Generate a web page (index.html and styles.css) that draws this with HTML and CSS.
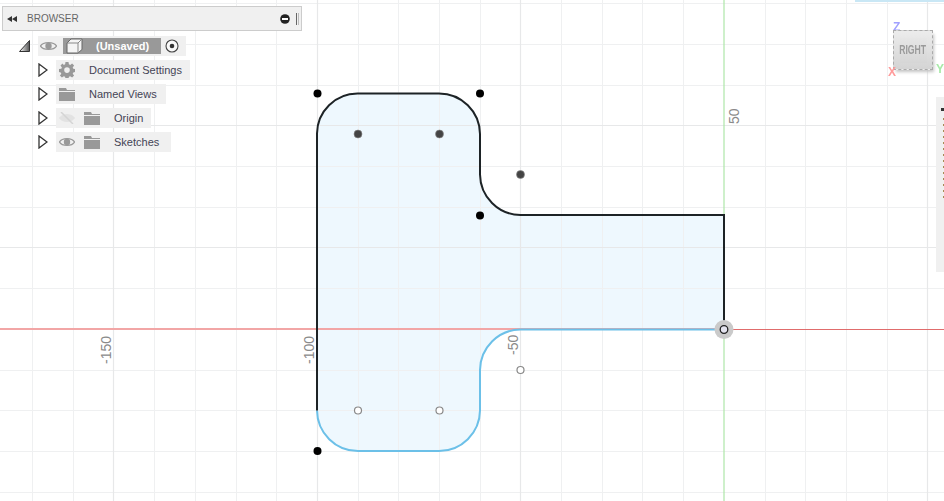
FILE: index.html
```html
<!DOCTYPE html>
<html lang="en">
<head>
<meta charset="utf-8">
<title>Browser sketch</title>
<link rel="stylesheet" href="styles.css">
</head>
<body>
<main class="viewport">
  <svg class="canvas" width="944" height="501" viewBox="0 0 944 501" aria-label="Sketch canvas">
    <path class="fill" d="M317 133.500A40.500 40.500 0 0 1 357.500 93.500H439A41 41 0 0 1 480 134V174.500A41 41 0 0 0 520.500 215H724V329.500H520.500A41 41 0 0 0 480 370V410.500A41 41 0 0 1 439 451H358A41 41 0 0 1 317 410.500Z"/>
    <path class="grid-minor" d="M32.500 0V501M73.500 0V501M154.500 0V501M195.500 0V501M236.500 0V501M276.500 0V501M358.500 0V501M398.500 0V501M439.500 0V501M480.500 0V501M561.500 0V501M602.500 0V501M642.500 0V501M683.500 0V501M765.500 0V501M805.500 0V501M846.500 0V501M887.500 0V501M0 3.500H944M0 44.500H944M0 85.500H944M0 166.500H944M0 207.500H944M0 288.500H944M0 370.500H944M0 410.500H944M0 451.500H944M0 492.500H944"/>
    <path class="grid-major" d="M113.500 0V501M317.500 0V501M520.500 0V501M927.500 0V501M0 125.500H944M0 247.500H944"/>
    <path class="axis-x" d="M0 329H724"/>
    <path class="axis-x-right" d="M724 329.500H944"/>
    <path class="axis-y" d="M724 0V501"/>
    <text class="dim" transform="translate(111 364) rotate(-90)">-150</text>
    <text class="dim" transform="translate(314 364) rotate(-90)">-100</text>
    <text class="dim" transform="translate(518 355) rotate(-90)">-50</text>
    <text class="dim" transform="translate(739 124) rotate(-90)">50</text>
    <path class="edge-blue" d="M724 329.500H520.500A41 41 0 0 0 480 370V410.500A41 41 0 0 1 439 451H358A41 41 0 0 1 317 410.500"/>
    <path class="edge-black" d="M317 410.500V133.500A40.500 40.500 0 0 1 357.500 93.500H439A41 41 0 0 1 480 134V174.500A41 41 0 0 0 520.500 215H724V329"/>
    <g class="pt-solid">
      <circle cx="317.500" cy="93.500" r="4"/><circle cx="480" cy="93.500" r="4"/><circle cx="480" cy="215.500" r="4"/><circle cx="317.500" cy="451" r="4"/>
    </g>
    <g class="pt-dark">
      <circle cx="358" cy="134" r="4"/><circle cx="439.500" cy="134" r="4"/><circle cx="520.500" cy="174.500" r="4"/>
    </g>
    <g class="pt-open">
      <circle cx="358" cy="410.500" r="3.500"/><circle cx="439.500" cy="410.500" r="3.500"/><circle cx="520.500" cy="370" r="3.500"/>
    </g>
    <circle class="origin-halo" cx="724" cy="329.500" r="9.500"/>
    <circle class="origin-pt" cx="724" cy="329.500" r="3.800"/>
  </svg>

  <div class="top-strip"></div>

  <section class="browser">
    <header class="browser-head">
      <svg class="rewind" width="10" height="6" viewBox="0 0 10 6"><path d="M5 0V6L0 3ZM10 0V6L5 3Z"/></svg>
      <span class="browser-title">BROWSER</span>
      <svg class="collapse" width="10" height="10" viewBox="0 0 10 10"><circle cx="5" cy="5" r="4.800"/><rect x="2" y="4" width="6" height="2" fill="#fff"/></svg>
      <span class="grip"></span>
    </header>
    <ul class="tree">
      <li class="node node-root">
        <svg class="twist" width="11" height="12" viewBox="0 0 11 12"><defs><linearGradient id="tw" x1="0" x2="1" y1="0" y2="0"><stop offset="0" stop-color="#fff"/><stop offset="1" stop-color="#555"/></linearGradient></defs><path d="M10.500 .5V11.500H.5Z" fill="url(#tw)" stroke="#333"/></svg>
        <div class="chip chip-root">
          <svg class="ico" width="17" height="12" viewBox="0 0 17 12"><path d="M.5 6C3 1.500 14 1.500 16.500 6 14 10.500 3 10.500 .5 6Z" fill="none" stroke="#999" stroke-width="1.300"/><circle cx="8.500" cy="6" r="3.200" fill="#999"/></svg>
          <div class="root-bar">
            <svg class="cube" width="17" height="16" viewBox="0 0 17 16"><path d="M1 5 5 1H16V11.500L12 15H1Z" fill="#f4f4f4" stroke="#666"/><path d="M1 5H12V15M12 5 16 1" fill="none" stroke="#888"/></svg>
            <span class="root-label">(Unsaved)</span>
          </div>
          <svg class="radio" width="14" height="14" viewBox="0 0 14 14"><circle cx="7" cy="7" r="6" fill="#fafafa" stroke="#444" stroke-width="1.100"/><circle cx="7" cy="7" r="2.300" fill="#333"/></svg>
        </div>
      </li>
      <li class="node">
        <svg class="twist-closed" width="10" height="14" viewBox="0 0 10 14"><path d="M1 1 9 7 1 13Z" fill="#fff" stroke="#333" stroke-width="1.300"/></svg>
        <div class="chip chip-doc">
          <svg class="ico" width="16" height="16" viewBox="0 0 16 16"><path fill="#999" fill-rule="evenodd" d="M6.500 0h3l.4 2.300 1.300.6L13.100 1.500l2 2-1.400 1.900.6 1.300 2.300.4v2.900l-2.300.4-.6 1.300 1.400 1.900-2 2-1.900-1.400-1.300.6-.4 2.300h-3l-.4-2.300-1.300-.6L2.900 15.600l-2-2 1.400-1.900-.6-1.300L0 10V7.100l2.300-.4.6-1.300L1.500 3.500l2-2L4.800 2.900l1.300-.6ZM8 5.300A2.800 2.800 0 1 0 8 10.900 2.800 2.800 0 1 0 8 5.300Z"/></svg>
          <span class="label label-doc">Document Settings</span>
        </div>
      </li>
      <li class="node">
        <svg class="twist-closed" width="10" height="14" viewBox="0 0 10 14"><path d="M1 1 9 7 1 13Z" fill="#fff" stroke="#333" stroke-width="1.300"/></svg>
        <div class="chip chip-views">
          <svg class="ico" width="16" height="13" viewBox="0 0 16 13"><path fill="#999" d="M0 0H7L8 2H16V3H0ZM0 4H16V13H0Z"/></svg>
          <span class="label label-doc">Named Views</span>
        </div>
      </li>
      <li class="node">
        <svg class="twist-closed" width="10" height="14" viewBox="0 0 10 14"><path d="M1 1 9 7 1 13Z" fill="#fff" stroke="#333" stroke-width="1.300"/></svg>
        <div class="chip chip-origin">
          <svg class="ico" width="16" height="12" viewBox="0 0 16 12"><path d="M.5 6C3 1.500 13 1.500 15.500 6 13 10.500 3 10.500 .5 6Z" fill="#e2e2e2" stroke="#e2e2e2"/><path d="M2 0 14 12" stroke="#d4d4d4" stroke-width="1.500"/></svg>
          <svg class="ico folder" width="16" height="13" viewBox="0 0 16 13"><path fill="#999" d="M0 0H7L8 2H16V3H0ZM0 4H16V13H0Z"/></svg>
          <span class="label label-sub">Origin</span>
        </div>
      </li>
      <li class="node">
        <svg class="twist-closed" width="10" height="14" viewBox="0 0 10 14"><path d="M1 1 9 7 1 13Z" fill="#fff" stroke="#333" stroke-width="1.300"/></svg>
        <div class="chip chip-sketches">
          <svg class="ico" width="16" height="12" viewBox="0 0 16 12"><path d="M.5 6C3 1.500 13 1.500 15.500 6 13 10.500 3 10.500 .5 6Z" fill="none" stroke="#999" stroke-width="1.300"/><circle cx="8" cy="6" r="3.200" fill="#999"/></svg>
          <svg class="ico folder" width="16" height="13" viewBox="0 0 16 13"><path fill="#999" d="M0 0H7L8 2H16V3H0ZM0 4H16V13H0Z"/></svg>
          <span class="label label-sub">Sketches</span>
        </div>
      </li>
    </ul>
  </section>

  <div class="viewcube">
    <span class="axis-letter letter-z">Z</span>
    <div class="cube-face"><span class="cube-inner"><span class="cube-text">RIGHT</span></span></div>
    <span class="axis-letter letter-x">X</span>
    <span class="axis-letter letter-y">Y</span>
  </div>

  <aside class="side-panel">
    <span class="side-arrow"></span>
    <span class="side-dots"></span>
  </aside>
</main>
</body>
</html>
```
FILE: styles.css
```css
* { box-sizing: border-box; }
html, body { margin: 0; padding: 0; }
body { background: #fff; font-family: "Liberation Sans", Arial, sans-serif; }
.viewport { position: relative; width: 944px; height: 501px; overflow: hidden; background: #fff; }
.canvas { position: absolute; left: 0; top: 0; display: block; }
.canvas path { fill: none; }
.canvas .fill { fill: #eef8fe; }
.canvas .grid-minor { stroke: #eff0f1; stroke-width: 1; }
.canvas .grid-major { stroke: #e7e8e9; stroke-width: 1.200; }
.canvas .axis-x { stroke: #f2a6a6; stroke-width: 2; }
.canvas .axis-x-right { stroke: #e06c6c; stroke-width: 1; }
.canvas .axis-y { stroke: #aee6a8; stroke-width: 1.200; }
.dim { font: 14px "Liberation Sans", Arial, sans-serif; fill: #8a8a8a; }
.canvas .edge-blue { stroke: #6cc0e8; stroke-width: 2; }
.canvas .edge-black { stroke: #1d2326; stroke-width: 2; }
.pt-solid circle { fill: #000; }
.pt-dark circle { fill: #444; stroke: #888; stroke-width: .6; }
.pt-open circle { fill: #fff; stroke: #888; stroke-width: 1.200; }
.origin-halo { fill: #cacaca; }
.origin-pt { fill: #e3e3ee; stroke: #222; stroke-width: 1.300; }

.top-strip { position: absolute; left: 855px; top: 0; width: 89px; height: 2px; background: #c9e7f5; }

.browser { position: absolute; left: 2px; top: 6px; width: 300px; }
.browser-head { display: flex; align-items: center; height: 25px; padding: 0 2px 0 4px; background: #f0f0f0; border: 1px solid #ccc; }
.rewind { fill: #333; margin-right: 10px; }
.browser-title { flex: 1; font-size: 10px; color: #666; }
.collapse { fill: #222; margin-right: 6px; }
.grip { width: 3px; height: 12px; border-left: 1px solid #666; border-right: 1px solid #bbb; }

.tree { list-style: none; margin: 5px 0 0; padding: 0 0 0 17px; display: flex; flex-direction: column; gap: 4px; }
.node { display: flex; align-items: center; height: 20px; padding-left: 19px; gap: 8px; }
.node-root { padding-left: 0; gap: 8px; }
.chip { display: flex; align-items: center; height: 20px; background: #f0f0f0; color: #445; font-size: 11px; }
.chip-root { width: 148px; padding-left: 2px; }
.chip-doc { width: 134px; padding-left: 3px; }
.chip-views { width: 110px; padding-left: 3px; }
.chip-origin { width: 95px; padding-left: 3px; }
.chip-sketches { width: 115px; padding-left: 3px; }
.ico { flex: none; }
.folder { margin-left: 9px; }
.label-doc { margin-left: 14px; white-space: nowrap; }
.label-sub { margin-left: 14px; white-space: nowrap; }
.root-bar { display: flex; align-items: center; width: 98px; height: 16px; margin-left: 6px; background: #999; }
.cube { margin-left: 3px; }
.root-label { margin-left: 13px; font-size: 11px; font-weight: bold; color: #fff; }
.radio { margin-left: 4px; }

.viewcube { position: absolute; left: 886px; top: 20px; width: 58px; height: 58px; filter: blur(.4px); }
.cube-face { position: absolute; left: 7px; top: 10px; width: 40px; height: 40px; display: flex; align-items: center; justify-content: center; background: linear-gradient(#ececec, #d4d4d4); border: 1px dashed #aaa; box-shadow: 2px 3px 3px -1px #c4c4c4; }
.cube-inner { width: 27px; height: 25px; display: flex; align-items: center; justify-content: center; background: linear-gradient(#e6e6e6, #d6d6d6); }
.cube-text { display: inline-block; font: bold 12px "Liberation Sans", Arial, sans-serif; color: #9a9a9a; transform: scaleX(.72); }
.axis-letter { position: absolute; font: bold 12px "Liberation Sans", Arial, sans-serif; }
.letter-z { left: 7px; top: 0; color: #a0a0ff; }
.letter-x { left: 2px; top: 45px; color: #ff9a9a; }
.letter-y { left: 50px; top: 42px; color: #a8eaa8; }

.side-panel { position: absolute; left: 936px; top: 97px; width: 8px; height: 175px; background: #f0f0f0; }
.side-arrow { position: absolute; left: 5px; top: 11px; width: 3px; height: 3px; background: #333; }
.side-dots { position: absolute; left: 7px; top: 21px; width: 1px; height: 80px; background: repeating-linear-gradient(#a88a55 0 2px, transparent 2px 6px); }
```
